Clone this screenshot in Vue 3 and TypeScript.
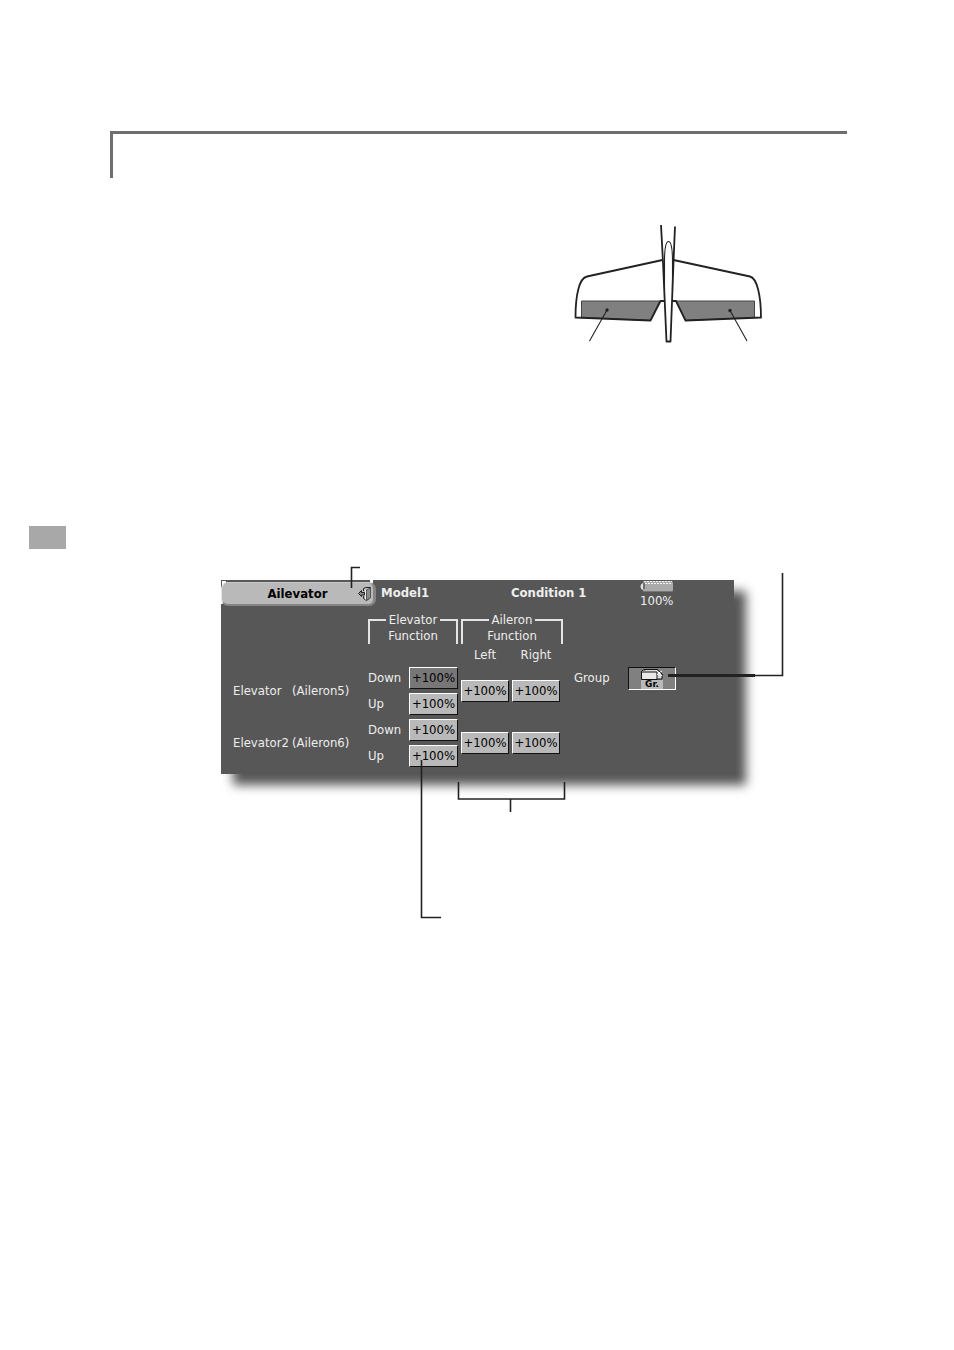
<script setup lang="ts">
import { ref } from 'vue'

interface Surface {
  name: string
  channel: string
  down: string
  up: string
  left: string
  right: string
}

const surfaces: Surface[] = [
  { name: 'Elevator', channel: '(Aileron5)', down: '+100%', up: '+100%', left: '+100%', right: '+100%' },
  { name: 'Elevator2', channel: '(Aileron6)', down: '+100%', up: '+100%', left: '+100%', right: '+100%' },
]

const selected = ref('0-down')
</script>

<template>
  <main class="page">
    <header class="heading-rule"></header>

    <svg class="tail" viewBox="560 215 220 135" role="img" aria-label="Tail plane with two elevators">
      <g class="flap">
        <path d="M581.500 301H660L650.500 320.500L581.500 317.500Z" />
        <path d="M754.500 301H676L685.500 320.500L754.500 317.500Z" />
      </g>
      <g class="outline">
        <path d="M661 225L663 262L666.500 341.500H670.500L673.500 262L675 226.500" />
        <path d="M662.500 260L587 276.500C579 278 575.500 296 575.500 317.500L650.500 320.500L660.500 301H664" />
        <path d="M673.500 260L750 276.500C757 278 761 296 761 317.500L685.500 320.500L676 301H672" />
        <path class="thin" d="M664.500 290V262C664.500 250 666 241.500 668.500 241.500S672.500 250 672.500 262V290" />
        <path class="thin" d="M607 310L589.500 341M730 310.500L747 341" />
      </g>
      <circle cx="607" cy="310" r="1.700" />
      <circle cx="730" cy="310.500" r="1.700" />
    </svg>

    <div class="side-tab"></div>

    <section class="figure">
      <div class="panel">
        <div class="topbar">
          <div class="title-corner">
            <button class="title" type="button">
              <span>Ailevator</span>
              <svg class="exit" viewBox="0 0 14 14" aria-hidden="true">
                <path d="M5.500 4V1.500L7.500 .500H12.500V10.500L8.500 13.500L5.500 11.500V9" fill="#bbb" stroke="#222" />
                <path d="M8.500 3L12.500 1V10.500L8.500 13.500Z" fill="#8c8c8c" stroke="#555" />
                <path d="M7.500 3V12.500" stroke="#eee" />
                <path d="M.500 6.500L3.500 3.500V5.500H6.500V8H3.500V9.500Z" fill="#888" stroke="#222" />
              </svg>
            </button>
          </div>
          <strong>Model1</strong>
          <strong>Condition 1</strong>
          <div class="battery">
            <svg viewBox="0 0 34 12" aria-hidden="true">
              <path d="M3 3.500Q1 4 1 6.500T3 9.500" fill="#ddd" stroke="#eee" />
              <rect x="3" y="1" width="30" height="11" rx="2" fill="#aaa" />
              <path d="M4 1.500H32M5 3.500H32" stroke="#f4f4f4" stroke-dasharray="2 1" />
              <path d="M4 11.500H32" stroke="#777" />
              <path d="M4 3V9" stroke="#333" />
            </svg>
            <span>100%</span>
          </div>
        </div>

        <div class="settings">
          <fieldset class="bracket elevator">
            <legend>Elevator</legend>
            Function
          </fieldset>
          <fieldset class="bracket aileron">
            <legend>Aileron</legend>
            Function
          </fieldset>
          <span class="side left">Left</span>
          <span class="side right">Right</span>

          <div v-for="(s, i) in surfaces" :key="s.name" class="surface">
            <div class="name">
              <span>{{ s.name }}</span><span>{{ s.channel }}</span>
            </div>
            <span class="direction">Down</span>
            <button class="value" :class="{ active: selected === i + '-down' }" type="button" :aria-label="s.name + ' down rate'" @click="selected = i + '-down'">{{ s.down }}</button>
            <button class="value tall" :class="{ active: selected === i + '-left' }" type="button" :aria-label="s.name + ' left rate'" @click="selected = i + '-left'">{{ s.left }}</button>
            <button class="value tall" :class="{ active: selected === i + '-right' }" type="button" :aria-label="s.name + ' right rate'" @click="selected = i + '-right'">{{ s.right }}</button>
            <span class="direction">Up</span>
            <button class="value" :class="{ active: selected === i + '-up' }" type="button" :aria-label="s.name + ' up rate'" @click="selected = i + '-up'">{{ s.up }}</button>
          </div>

          <span id="group-label" class="group-label">Group</span>
          <button class="group" type="button" aria-labelledby="group-label">
            <svg viewBox="0 0 24 12" aria-hidden="true">
              <path d="M1.500 11V3.500L3 2H9L10.500 3.500H17" fill="#eee" stroke="#111" />
              <path d="M4 1.500H17L22 6V11H17" fill="#ddd" stroke="#111" />
              <path d="M1.500 4H17V11.500H1.500Z" fill="#e8e8e8" stroke="#111" />
              <path d="M16 2L19 5L22 3M17 7L19 5L22 8" stroke="#fff" fill="none" />
              <path d="M17 1L23 7" stroke="#111" stroke-dasharray="2 1" />
            </svg>
            <span>Gr.</span>
          </button>
        </div>
      </div>

      <svg class="callouts" viewBox="221 560 570 360" aria-hidden="true">
        <path d="M360 567.500H351.500V588" />
        <path d="M755 675.500H782.500V573" />
        <path class="heavy" d="M668 675.500H755" />
        <path d="M458.500 782V799H564.500V782M510.500 799V812" />
        <path d="M421.500 760V917.500H441" />
      </svg>
    </section>
  </main>
</template>

<style>
body {
  margin: 0;
  background: #fff;
}
</style>

<style scoped>
.page {
  display: flex;
  flex-direction: column;
  padding: 131px 0 160px;
  font: 13px/16px "DejaVu Sans Condensed", "DejaVu Sans", sans-serif;
}
.heading-rule {
  height: 44px;
  margin: 0 107px 0 110px;
  border-top: 3px solid #6e6e6e;
  border-left: 3px solid #6e6e6e;
}
.tail {
  width: 220px;
  height: 135px;
  margin: 37px 174px 0 auto;
}
.flap path {
  fill: #808080;
  stroke: #444;
}
.outline path {
  fill: none;
  stroke: #222;
  stroke-width: 1.8;
  stroke-linejoin: round;
}
.outline .thin {
  stroke-width: 1.1;
}
.tail circle {
  fill: #222;
}
.side-tab {
  width: 37px;
  height: 23px;
  margin: 176px 0 31px 29px;
  background: #a8a8a8;
}
.figure {
  position: relative;
  margin: 0 220px 0 221px;
}
.panel {
  box-sizing: border-box;
  padding-bottom: 5px;
  background: #575757;
  color: #eee;
  box-shadow: 12px 11px 10px #575757;
}
.topbar {
  display: grid;
  grid-template-columns: 160px 130px 129px 1fr;
  align-items: start;
  height: 26px;
}
.topbar strong {
  padding-top: 5px;
}
.title-corner {
  width: 155px;
  padding-top: 2px;
  background:
    linear-gradient(#fff, #fff) 1px 1px / 4px 5px no-repeat,
    linear-gradient(#fff, #fff) 0 20px / 3px 4px no-repeat,
    linear-gradient(#fff, #fff) 149px 0 / 3px 4px no-repeat;
}
.title {
  display: flex;
  align-items: center;
  width: 155px;
  height: 24px;
  padding: 1px 1px 0 0;
  border: solid;
  border-width: 1px 3px 2px 1px;
  border-color: #c8c8c8 #858585 #858585 #e4e4e4;
  border-radius: 7px;
  background: #b9b9b9;
  color: #000;
  font: inherit;
  font-weight: bold;
}
.title span {
  flex: 1;
  padding-left: 15px;
  text-align: center;
}
.exit {
  width: 14px;
  height: 14px;
  fill: none;
}
.battery {
  display: flex;
  flex-direction: column;
  width: 34px;
}
.battery svg {
  width: 34px;
  height: 12px;
}
.battery span {
  margin-top: 1px;
}
.settings {
  display: grid;
  grid-template-columns: 135px 41px 52px 51px 62px 54px 1fr;
  grid-template-rows: 32px 21px repeat(4, 26px);
  align-items: center;
  padding: 6px 0 0 12px;
}
.bracket {
  box-sizing: border-box;
  min-width: 0;
  height: 32px;
  margin: 0;
  padding: 0;
  border: 2px solid #e4e4e4;
  border-bottom: 0;
  text-align: center;
}
.bracket legend {
  margin: 0 auto;
  padding: 0 3px;
}
.elevator {
  grid-area: 1 / 2 / 2 / 4;
  width: 90px;
}
.aileron {
  grid-area: 1 / 4 / 2 / 6;
  width: 102px;
}
.side {
  grid-row: 2;
  width: 48px;
  text-align: center;
}
.left {
  grid-column: 4;
}
.right {
  grid-column: 5;
}
.surface {
  display: grid;
  grid-column: 1 / 6;
  grid-row: span 2;
  grid-template-columns: 135px 41px 52px 51px 62px;
  grid-template-rows: 26px 26px;
  align-items: center;
}
.name {
  display: flex;
  grid-row: span 2;
}
.name span:first-child {
  width: 59px;
}
.value {
  box-sizing: border-box;
  width: 49px;
  height: 22px;
  padding: 0;
  border: 1px solid;
  border-color: #fff #111 #111 #fff;
  background: #b9b9b9;
  color: #000;
  font: inherit;
  text-align: center;
}
.value.active {
  background: #777;
}
.tall {
  grid-row: span 2;
  width: 48px;
}
.group-label {
  grid-area: 3 / 6;
}
.group {
  grid-area: 3 / 7;
  display: flex;
  flex-direction: column;
  align-items: center;
  box-sizing: border-box;
  width: 48px;
  height: 23px;
  padding: 0;
  border: 1px solid;
  border-color: #111 #fff #fff #111;
  background: #808080;
  color: #000;
  font: bold 9px/9px "DejaVu Sans", sans-serif;
}
.group svg {
  width: 24px;
  height: 12px;
}
.group span {
  width: 22px;
  background: #b9b9b9;
}
.callouts {
  position: absolute;
  top: -20px;
  left: 0;
  width: 570px;
  height: 360px;
  fill: none;
  stroke: #222;
  stroke-width: 1.6;
  pointer-events: none;
}
.callouts .heavy {
  stroke-width: 3;
}
</style>
